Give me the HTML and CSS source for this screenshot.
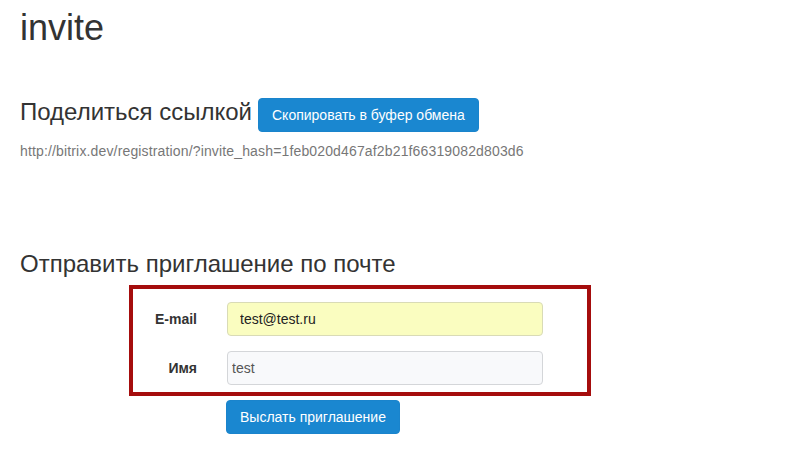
FILE: index.html
```html
<!DOCTYPE html>
<html lang="ru">
<head>
<meta charset="utf-8">
<title>invite</title>
<link rel="stylesheet" href="styles.css">
</head>
<body>
<div class="page">
  <h1 class="title">invite</h1>
  <h3 class="share"><span>Поделиться ссылкой</span><button class="btn" type="button">Скопировать в буфер обмена</button></h3>
  <p class="link">http://bitrix.dev/registration/?invite_hash=1feb020d467af2b21f66319082d803d6</p>
  <h3 class="mail">Отправить приглашение по почте</h3>
  <form class="invite-box">
    <label class="label" for="email">E-mail</label>
    <input class="input input-email" id="email" type="text" value="test@test.ru">
    <label class="label" for="name">Имя</label>
    <input class="input input-name" id="name" type="text" value="test">
  </form>
  <div class="actions"><button class="btn" type="button">Выслать приглашение</button></div>
</div>
</body>
</html>
```
FILE: styles.css
```css
* { box-sizing: border-box; }
body {
  margin: 0;
  background: #fff;
  color: #333;
  font-family: "Liberation Sans", Arial, Helvetica, sans-serif;
  font-size: 14px;
  line-height: 20px;
}
.page { padding: 8px 20px 0; }
.title {
  margin: 0;
  font-size: 36px;
  line-height: 40px;
  font-weight: 400;
  color: #333;
}
.share {
  margin: 50px 0 9px;
  display: flex;
  align-items: baseline;
  gap: 6px;
  font-size: 24px;
  line-height: 26.4px;
  font-weight: 400;
  color: #333;
}
.btn {
  height: 34px;
  padding: 6px 13px;
  border: 1px solid #1a84cc;
  border-radius: 4px;
  background: #1a87d0;
  color: #fff;
  font-family: "Liberation Sans", Arial, Helvetica, sans-serif;
  font-size: 14px;
  line-height: 20px;
  cursor: pointer;
}
.link {
  margin: 0;
  color: #777;
  font-size: 14px;
  line-height: 20px;
  letter-spacing: 0.15px;
}
.mail {
  margin: 90px 0 8px;
  font-size: 24px;
  line-height: 26.4px;
  font-weight: 400;
  color: #333;
}
.invite-box {
  margin: 0 0 0 109px;
  width: 462px;
  border: 4px solid #a50d0d;
  padding: 13px 44px 7px 0;
  display: grid;
  grid-template-columns: 64px 316px;
  column-gap: 30px;
  row-gap: 15px;
  align-items: center;
}
.label {
  text-align: right;
  font-weight: 700;
  color: #333;
}
.input {
  height: 34px;
  width: 316px;
  border-radius: 4px;
  font-family: "Liberation Sans", Arial, Helvetica, sans-serif;
  font-size: 14px;
  line-height: 20px;
  outline: none;
}
.input-email {
  padding: 6px 12px;
  background: #fafdc0;
  border: 1px solid #d9dbb6;
  color: #222;
}
.input-name {
  padding: 6px 4px;
  background: #f8f9fb;
  border: 1px solid #d4d6d9;
  color: #555;
}
.actions {
  margin-top: 4px;
  padding-left: 206px;
}
```
